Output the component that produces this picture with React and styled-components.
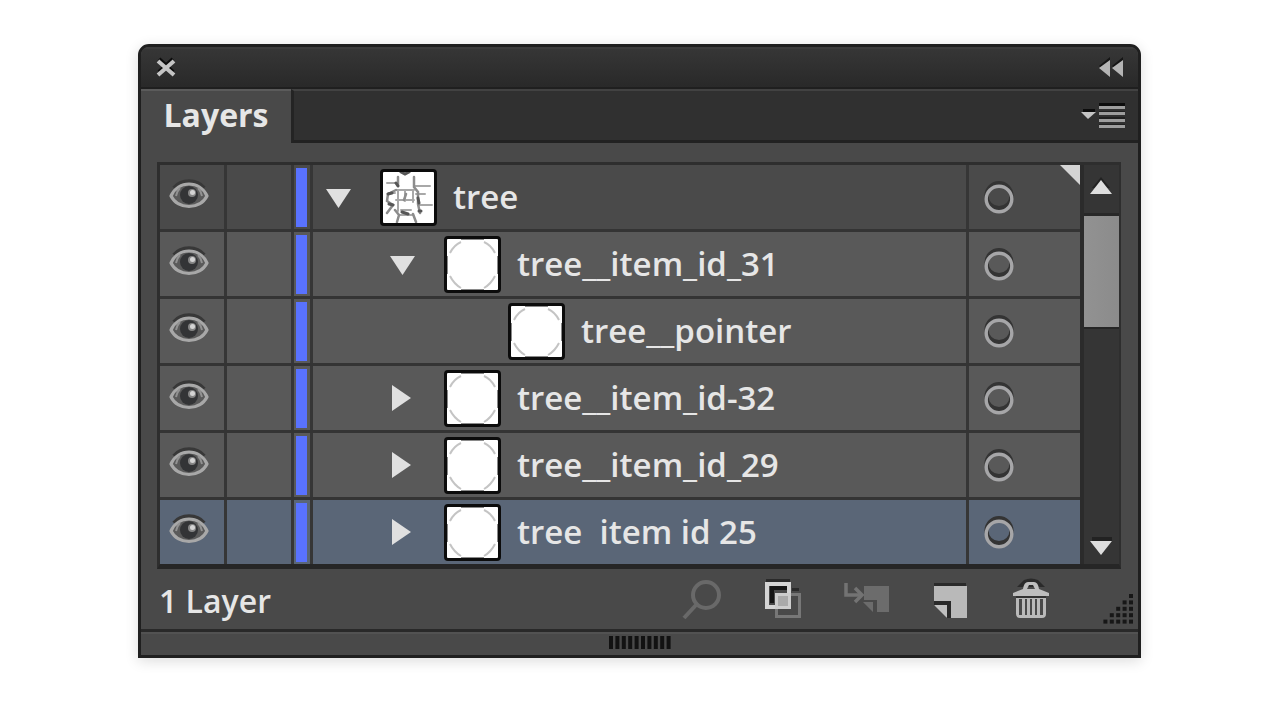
import React from "react";
import styled, { createGlobalStyle, css } from "styled-components";

const GlobalStyle = createGlobalStyle`
  * { box-sizing: border-box; }
  body {
    margin: 0;
    background: #fff;
    font-family: "Open Sans", "Noto Sans", sans-serif;
    color: #e6e6e6;
  }
  svg { display: block; }
`;

const Page = styled.main`
  padding: 44px 139px 60px 138px;
`;

const Panel = styled.section`
  min-width: 720px;
  display: flex;
  flex-direction: column;
  border: 3px solid #1f1f1f;
  border-radius: 11px 11px 0 0;
  background: #494949;
  box-shadow: 0 3px 14px rgba(0, 0, 0, 0.14);
  overflow: hidden;
`;

const PlainButton = styled.button`
  display: flex;
  align-items: center;
  justify-content: center;
  padding: 0;
  border: 0;
  background: none;
  color: inherit;
  font: inherit;
  cursor: pointer;
`;

const TitleBar = styled.header`
  display: flex;
  justify-content: space-between;
  align-items: center;
  height: 42px;
  padding: 0 14px 0 12px;
  border-top: 2px solid #3c3c3c;
  border-bottom: 2px solid #1f1f1f;
  background: linear-gradient(#363636, #292929);
`;

const TabBar = styled.div`
  display: flex;
  justify-content: space-between;
  height: 54px;
`;

const Tab = styled(PlainButton)`
  width: 150px;
  padding-bottom: 4px;
  border-top: 2px solid #5b5b5b;
  font-size: 32px;
  line-height: 40px;
  font-weight: 700;
`;

const TabRest = styled.div`
  flex: 1;
  display: flex;
  justify-content: flex-end;
  align-items: center;
  padding-right: 12px;
  border-left: 3px solid #242424;
  border-bottom: 3px solid #222;
  border-top: 2px solid #424242;
  background: #303030;
`;

const Body = styled.div`
  padding: 19px 17px 0 16px;
`;

const List = styled.div`
  display: flex;
  border: 3px solid #2e2e2e;
  border-right-width: 2px;
  border-bottom: 5px solid #262626;
`;

const Rows = styled.ul`
  flex: 1;
  min-width: 0;
  margin: 0;
  padding: 0;
  list-style: none;
`;

const rowTone = {
  root: "#4a4a4a",
  item: "#595959",
  selected: "#5a6677",
};

const Row = styled.li`
  position: relative;
  display: flex;
  height: 67px;
  border-bottom: 3px solid #343434;
  background: ${(p) => rowTone[p.$tone]};
  &:last-child { height: 64px; border-bottom: 0; }
`;

const cell = css`
  flex: none;
  border-right: 3px solid #363636;
`;

const EyeCell = styled(PlainButton)`
  ${cell}
  width: 67px;
  padding: 0 6px 8px 0;
`;

const LockCell = styled.div`
  ${cell}
  width: 67px;
`;

const ColorCell = styled.div`
  ${cell}
  width: 19px;
  padding: 3px 3px 2px 2px;
`;

const ColorBar = styled.div`
  height: 100%;
  background: #5972ff;
`;

const NameCell = styled.div`
  ${cell}
  flex: 1;
  min-width: 0;
  display: flex;
  align-items: center;
  padding-left: ${(p) => 12 + p.$level * 64}px;
`;

const Toggle = styled(PlainButton)`
  flex: none;
  width: 28px;
  height: 28px;
  margin-right: 27px;
  visibility: ${(p) => (p.$hidden ? "hidden" : "visible")};
`;

const Thumb = styled.span`
  flex: none;
  width: 57px;
  height: 57px;
  margin-right: 16px;
  border: 3px solid #0c0c0c;
  border-radius: 4px;
  background: #fff;
`;

const Name = styled.span`
  font-size: 33px;
  line-height: 44px;
  font-weight: 600;
  white-space: pre;
`;

const TargetCell = styled(PlainButton)`
  flex: none;
  width: 111px;
  justify-content: flex-start;
  padding-left: 13px;
`;

const Corner = styled.svg`
  position: absolute;
  top: 0;
  right: 0;
`;

const Scrollbar = styled.div`
  display: flex;
  flex-direction: column;
  width: 39px;
  border-left: 4px solid #2b2b2b;
  background: #353535;
`;

const ScrollButton = styled(PlainButton)`
  height: ${(p) => (p.$down ? 36 : 48)}px;
  padding-bottom: ${(p) => (p.$down ? 0 : 4)}px;
`;

const ScrollTrack = styled.div`
  flex: 1;
  border-top: 3px solid #282828;
`;

const ScrollThumb = styled.div`
  height: 113px;
  border-bottom: 2px solid #262626;
  background: linear-gradient(90deg, #929292, #8b8b8b);
`;

const Footer = styled.footer`
  display: flex;
  align-items: center;
  height: 60px;
  padding: 0 5px 0 18px;
`;

const Status = styled.p`
  flex: 1;
  margin: 0;
  padding-top: 4px;
  font-size: 32px;
  line-height: 44px;
  font-weight: 600;
  white-space: nowrap;
`;

const Tools = styled.div`
  display: flex;
  gap: 34px;
  margin-right: 46px;
`;

const Grip = styled.svg`
  align-self: flex-end;
  margin-bottom: 3px;
`;

const BottomBar = styled.div`
  display: flex;
  justify-content: center;
  height: 26px;
  padding-top: 3px;
  border-top: 3px solid #292929;
  box-shadow: inset 0 2px 0 #525252;
`;

function CloseIcon() {
  return (
    <svg width="26" height="28" viewBox="0 0 26 28" fill="none" strokeWidth="4">
      <path d="M6 5 20 18M20 5 6 18" stroke="#0c0c0c" />
      <path d="M5 7 21 21M21 7 5 21" stroke="#c4c4c4" />
    </svg>
  );
}

function CollapseIcon() {
  return (
    <svg width="26" height="24" viewBox="0 0 26 24">
      <path d="M12 1V18L1 10ZM25 1V18L14 10Z" fill="#151515" />
      <path d="M12 4V21L1 12ZM25 4V21L14 12Z" fill="#b4b4b4" />
    </svg>
  );
}

function MenuIcon() {
  return (
    <svg width="46" height="28" viewBox="0 0 46 28">
      <path d="M3 7H15V10H3ZM19 1H45V4H19Z" fill="#0c0c0c" />
      <path d="M19 9H45V11H19ZM19 15H45V17H19ZM19 22H45V24H19Z" fill="#202020" />
      <path d="M1 10H16L8 17Z" fill="#c4c4c4" />
      <path d="M19 4H45V7H19ZM19 10H45V13H19ZM19 17H45V20H19ZM19 23H45V26H19Z" fill="#9d9d9d" />
    </svg>
  );
}

function EyeIcon() {
  return (
    <svg width="42" height="34" viewBox="0 0 42 34">
      <path d="M6 12C13 3 29 3 36 12" fill="none" stroke="#383838" strokeWidth="4" />
      <path d="M3 20C10 4 32 4 39 20C32 34 10 34 3 20Z" fill="#5a5a5a" />
      <circle cx="21" cy="19" r="9" fill="#333436" />
      <path d="M3 20C10 4 32 4 39 20C32 34 10 34 3 20Z" fill="none" stroke="#a8a8a8" strokeWidth="3.200" strokeLinejoin="round" />
      <path d="M8 20Q9 15 12 12M34 20Q33 15 30 12" fill="none" stroke="#929292" strokeWidth="2" />
      <circle cx="24" cy="17" r="4" fill="#858585" />
      <circle cx="24.500" cy="16.500" r="2.500" fill="#d4d4d4" />
    </svg>
  );
}

function TargetIcon() {
  return (
    <svg width="34" height="38" viewBox="0 0 34 38" fill="none">
      <circle cx="17" cy="17.500" r="12.500" stroke="#343434" strokeWidth="4" />
      <circle cx="17" cy="21" r="12.800" stroke="#a6a6a8" strokeWidth="3.400" />
    </svg>
  );
}

function Arrow({ open }) {
  return (
    <svg width="28" height="28" viewBox="0 0 28 28">
      <path d={open ? "M1 6H26L13.500 25Z" : "M3 1V27L22 14Z"} fill="#e0e0e0" />
    </svg>
  );
}

function ScrollArrow({ down }) {
  return (
    <svg width="26" height="22" viewBox="0 0 26 22">
      <path d={down ? "M3 2H23V7H3Z" : "M12 1 21 12H3Z"} fill="#222" />
      <path d={down ? "M1 6H23L12 20Z" : "M12 4 23 18H1Z"} fill="#dedede" />
    </svg>
  );
}

function ItemArt() {
  return (
    <svg width="51" height="51" viewBox="0 0 51 51" fill="none" stroke="#c4c4c4" strokeWidth="2">
      <path d="M3 14Q7 6 14 3M37 3Q44 6 48 14M3 37Q7 45 14 49M37 49Q44 45 48 37" />
      <path d="M14 0H37M14 51H37M0 17V35M51 17V35" stroke="#8a8a8a" />
    </svg>
  );
}

function TreeArt() {
  return (
    <svg width="51" height="51" viewBox="0 0 51 51" fill="none" strokeLinecap="round">
      <path d="M4 11H14M32 14H47M13 18H31M13 28H31M36 33H49M6 21H12M33 22H42M18 38H28M16 43H30M15 18V39M30 18V30M22 19V29" stroke="#a8a8a8" strokeWidth="2" />
      <path d="M15 5V14M31 5V15L35 20V32L37 41M13 18 5 22 4 29 10 33 4 41M12 38 16 43 14 50M30 42 33 50M23 22 21 28" stroke="#8c8c8c" strokeWidth="2.500" />
      <path d="M18 0 22 2 26 0M13 11 15 14M5 22 9 21M6 32 10 33M35 26 36 31M36 39H38M19 40 25 42" stroke="#565656" strokeWidth="3" />
    </svg>
  );
}

const toolIcons = {
  "Locate object": (
    <g fill="none" stroke="#696969" strokeWidth="4">
      <circle cx="27" cy="18" r="13" />
      <path d="M17 28 5 41" />
    </g>
  ),
  "Make clipping mask": (
    <g>
      <path d="M5 2H29V5H5ZM31 11H38V14H31Z" fill="#2a2a2a" />
      <path d="M9 9H25V23H9Z" fill="#4a4a4a" />
      <path d="M9 9H26V13H13V26H9Z" fill="#161616" />
      <path d="M15.500 17.500H38.500V39.500H15.500Z" fill="none" stroke="#777" strokeWidth="3" />
      <path d="M6 7H28V30H6Z" fill="none" stroke="#d4d4d4" strokeWidth="4" />
      <path d="M14 16H30V32H14Z" fill="#cdcdcd" />
      <path d="M17 19H27V29H17Z" fill="#aaa" />
    </g>
  ),
  "New sublayer": (
    <g fill="#6c6c6c">
      <path d="M3 6V18H17" fill="none" stroke="#737373" strokeWidth="3.500" />
      <path d="M12 11 19 18 12 25" fill="none" stroke="#737373" strokeWidth="3.500" />
      <path d="M21 9H46V35H34V23H21ZM20 25H30V35Z" />
    </g>
  ),
  "New layer": (
    <g>
      <path d="M9 6H41V9H9ZM9 24H26V41H21V29H9Z" fill="#2a2a2a" />
      <path d="M9 9H42V41H26V24H9Z" fill="#b9b9b9" />
      <path d="M9 28H22V41Z" fill="#c0c0c0" />
    </g>
  ),
  "Delete selection": (
    <g>
      <path d="M17 3Q24 0 31 3L38 10H10Z" fill="#2a2a2a" />
      <path d="M6 19V16L16 12Q17 5 21 5H27Q31 5 32 12L42 16V19ZM20 12H28L26 8H22Z" fill="#bebebe" fillRule="evenodd" />
      <path d="M9 19H39V21H9Z" fill="#333" />
      <path d="M9 21H39V37Q39 41 35 41H13Q9 41 9 37ZM12 22V38H15V22ZM18 22V38H20V22ZM23 22V38H25V22ZM28 22V38H30V22ZM33 22V38H36V22Z" fill="#b9b9b9" fillRule="evenodd" />
    </g>
  ),
};

const gripDots = [0, 1, 2, 3, 4].flatMap((row) =>
  Array.from({ length: row + 1 }, (_, i) => ({ x: 28 - i * 6.4, y: row * 6.4 }))
);

const layers = [
  { name: "tree", level: 0, open: true, tone: "root" },
  { name: "tree__item_id_31", level: 1, open: true, tone: "item" },
  { name: "tree__pointer", level: 2, leaf: true, tone: "item" },
  { name: "tree__item_id-32", level: 1, tone: "item" },
  { name: "tree__item_id_29", level: 1, tone: "item" },
  { name: "tree  item id 25", level: 1, tone: "selected" },
];

function LayerRow({ layer }) {
  const root = layer.level === 0;
  return (
    <Row $tone={layer.tone}>
      <EyeCell aria-label={`Toggle visibility of ${layer.name}`}><EyeIcon /></EyeCell>
      <LockCell />
      <ColorCell><ColorBar /></ColorCell>
      <NameCell $level={layer.level}>
        <Toggle $hidden={layer.leaf} aria-label={`Expand ${layer.name}`} aria-expanded={!!layer.open}>
          <Arrow open={layer.open} />
        </Toggle>
        <Thumb>{root ? <TreeArt /> : <ItemArt />}</Thumb>
        <Name>{layer.name}</Name>
      </NameCell>
      <TargetCell aria-label={`Target ${layer.name}`}><TargetIcon /></TargetCell>
      {root && (
        <Corner width="21" height="21" viewBox="0 0 21 21">
          <path d="M1 0H21V20Z" fill="#d4d4d4" />
        </Corner>
      )}
    </Row>
  );
}

export default function App() {
  return (
    <Page>
      <GlobalStyle />
      <Panel aria-label="Layers panel">
        <TitleBar>
          <PlainButton aria-label="Close"><CloseIcon /></PlainButton>
          <PlainButton aria-label="Collapse"><CollapseIcon /></PlainButton>
        </TitleBar>
        <TabBar>
          <Tab>Layers</Tab>
          <TabRest>
            <PlainButton aria-label="Panel menu"><MenuIcon /></PlainButton>
          </TabRest>
        </TabBar>
        <Body>
          <List>
            <Rows>
              {layers.map((layer) => <LayerRow key={layer.name} layer={layer} />)}
            </Rows>
            <Scrollbar>
              <ScrollButton aria-label="Scroll up"><ScrollArrow /></ScrollButton>
              <ScrollTrack><ScrollThumb /></ScrollTrack>
              <ScrollButton $down aria-label="Scroll down"><ScrollArrow down /></ScrollButton>
            </Scrollbar>
          </List>
        </Body>
        <Footer>
          <Status>1 Layer</Status>
          <Tools>
            {Object.entries(toolIcons).map(([label, art]) => (
              <PlainButton key={label} aria-label={label}>
                <svg width="48" height="44" viewBox="0 0 48 44">{art}</svg>
              </PlainButton>
            ))}
          </Tools>
          <Grip width="32" height="32" viewBox="0 0 32 32">
            {gripDots.map((d) => (
              <rect key={`${d.x}-${d.y}`} x={d.x} y={d.y} width="4" height="4" fill="#171717" />
            ))}
          </Grip>
        </Footer>
        <BottomBar>
          <svg width="64" height="16" viewBox="0 0 64 16">
            {Array.from({ length: 10 }, (_, i) => (
              <rect key={i} x={1 + i * 6.4} y="1" width="4" height="13" fill="#121212" />
            ))}
          </svg>
        </BottomBar>
      </Panel>
    </Page>
  );
}
